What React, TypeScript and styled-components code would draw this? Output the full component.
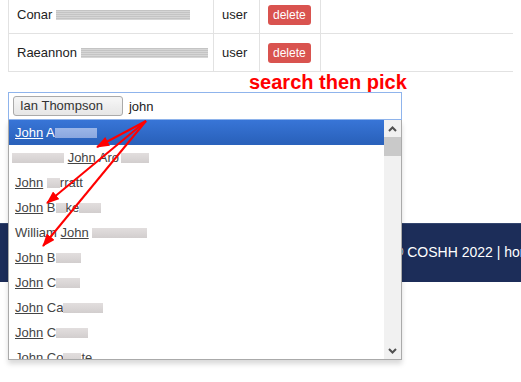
import { createGlobalStyle, styled } from "styled-components";

const GlobalStyle = createGlobalStyle`
  html, body {
    margin: 0;
    padding: 0;
    background: #fff;
  }
  body {
    font-family: "Liberation Sans", Arial, sans-serif;
    font-size: 13px;
    color: #222;
    overflow: hidden;
  }
`;

const Screen = styled.div`
  position: relative;
  display: flow-root;
  width: 521px;
  height: 382px;
  overflow: hidden;
`;

const Content = styled.div`
  margin: -4px 8px 0;
`;

const Row = styled.div`
  display: grid;
  grid-template-columns: 206px 46px 61px;
  height: 38px;
  box-sizing: border-box;
  border-bottom: 1px solid #e2e2e2;
`;

const Cell = styled.div<{ $first?: boolean }>`
  display: flex;
  align-items: center;
  padding-left: 8px;
  border-right: 1px solid #e2e2e2;
  border-left: ${(p) => (p.$first ? "1px solid #e2e2e2" : "none")};
  white-space: nowrap;
  font-size: 13px;
  color: #222;
`;

const TableRedact = styled.span<{ $w: number }>`
  display: inline-block;
  width: ${(p) => p.$w}px;
  height: 10px;
  margin-left: 4px;
  background: repeating-linear-gradient(
    to bottom,
    #c4c4c4 0px,
    #c4c4c4 1px,
    #d6d6d6 1px,
    #d6d6d6 2px
  );
  filter: blur(0.3px);
`;

const DeleteButton = styled.button`
  height: 20px;
  padding: 0 5px;
  border: none;
  border-radius: 3px;
  background: #d9534f;
  color: #fff;
  font-family: inherit;
  font-size: 12px;
  line-height: 20px;
`;

const Hint = styled.div`
  height: 20px;
  margin-left: 241px;
  font-size: 20px;
  line-height: 20px;
  font-weight: bold;
  color: #f00;
  white-space: nowrap;
`;

const SelectWrap = styled.div`
  position: relative;
  width: 394px;
`;

const SelectBox = styled.div`
  display: flex;
  align-items: center;
  gap: 6px;
  height: 28px;
  box-sizing: border-box;
  padding: 0 4px;
  border: 1px solid #8fb4ec;
  background: #fff;
`;

const Chip = styled.span`
  height: 20px;
  box-sizing: border-box;
  padding: 0 19px 0 6px;
  border: 1px solid #aaa;
  border-radius: 3px;
  background: linear-gradient(#f4f4f4 20%, #eee 50%, #e6e6e6);
  color: #333;
  line-height: 18px;
  white-space: nowrap;
`;

const Typed = styled.span`
  color: #222;
`;

const Dropdown = styled.div`
  position: absolute;
  top: 28px;
  left: 0;
  z-index: 10;
  display: flex;
  width: 394px;
  height: 240px;
  box-sizing: border-box;
  border: 1px solid #aaa;
  border-top: none;
  background: #fff;
  box-shadow: 0 4px 5px rgba(0, 0, 0, 0.15);
`;

const Results = styled.div`
  flex: 1;
  overflow: hidden;
`;

const Item = styled.div<{ $active?: boolean }>`
  height: 25px;
  padding-left: 6px;
  line-height: 25px;
  white-space: nowrap;
  color: ${(p) => (p.$active ? "#fff" : "#444")};
  background: ${(p) =>
    p.$active ? "linear-gradient(#3875d7 0%, #2a62bc 90%)" : "transparent"};
`;

const Match = styled.span`
  text-decoration: underline;
`;

const Redact = styled.span<{ $w: number; $active?: boolean; $gap?: number }>`
  display: inline-block;
  width: ${(p) => p.$w}px;
  height: 10px;
  margin-left: ${(p) => p.$gap ?? 0}px;
  vertical-align: -1px;
  background: ${(p) =>
    p.$active
      ? "linear-gradient(#9bb6e8, #8aa7df)"
      : "linear-gradient(#e2dede, #d2cece)"};
  filter: blur(0.4px);
`;

const Scrollbar = styled.div`
  display: flex;
  flex-direction: column;
  width: 17px;
  background: #f1f1f1;
`;

const ScrollArrow = styled.div`
  display: flex;
  align-items: center;
  justify-content: center;
  height: 17px;
`;

const Thumb = styled.div`
  height: 19px;
  background: #c9c9c9;
`;

const ScrollSpace = styled.div`
  flex: 1;
`;

const Footer = styled.div`
  margin-top: 103px;
  height: 58px;
  padding-left: 393px;
  background: #1c2d59;
  color: #fff;
  font-size: 14px;
  line-height: 56px;
  white-space: nowrap;
  border-top: 1px solid #34466f;
`;

const Overlay = styled.svg`
  position: absolute;
  top: 0;
  left: 0;
  z-index: 20;
  pointer-events: none;
`;

const users = [
  { name: "Conar", bar: 134 },
  { name: "Raeannon", bar: 127 },
];

function Chevron({ up }: { up?: boolean }) {
  return (
    <svg width="9" height="6" viewBox="0 0 9 6">
      <polyline
        points={up ? "1,5 4.5,1.5 8,5" : "1,1 4.5,4.5 8,1"}
        fill="none"
        stroke="#505050"
        strokeWidth="2"
      />
    </svg>
  );
}

export default function App() {
  return (
    <Screen>
      <GlobalStyle />
      <Content>
        {users.map((u) => (
          <Row key={u.name}>
            <Cell $first>
              {u.name}
              <TableRedact $w={u.bar} />
            </Cell>
            <Cell>user</Cell>
            <Cell>
              <DeleteButton>delete</DeleteButton>
            </Cell>
          </Row>
        ))}
        <Hint>search then pick</Hint>
        <SelectWrap>
          <SelectBox>
            <Chip>Ian Thompson</Chip>
            <Typed>john</Typed>
          </SelectBox>
          <Dropdown>
            <Results>
              <Item $active>
                <Match>John</Match> A<Redact $active $w={42} />
              </Item>
              <Item>
                <Redact $w={52} $gap={-3} /> <Match>John</Match> Aro
                <Redact $w={28} $gap={2} />
              </Item>
              <Item>
                <Match>John</Match> <Redact $w={13} />
                rratt
              </Item>
              <Item>
                <Match>John</Match> B<Redact $w={10} />
                ke
                <Redact $w={22} />
              </Item>
              <Item>
                William <Match>John</Match> <Redact $w={55} />
              </Item>
              <Item>
                <Match>John</Match> B<Redact $w={25} />
              </Item>
              <Item>
                <Match>John</Match> C<Redact $w={24} />
              </Item>
              <Item>
                <Match>John</Match> Ca<Redact $w={40} />
              </Item>
              <Item>
                <Match>John</Match> C<Redact $w={32} />
              </Item>
              <Item>
                <Match>John</Match> Co<Redact $w={18} />
                te
              </Item>
            </Results>
            <Scrollbar>
              <ScrollArrow>
                <Chevron up />
              </ScrollArrow>
              <Thumb />
              <ScrollSpace />
              <ScrollArrow>
                <Chevron />
              </ScrollArrow>
            </Scrollbar>
          </Dropdown>
        </SelectWrap>
      </Content>
      <Footer>© COSHH 2022 | home</Footer>
      <Overlay width="521" height="382" viewBox="0 0 521 382">
        <defs>
          <marker
            id="head"
            markerWidth="13"
            markerHeight="10"
            refX="12"
            refY="5"
            orient="auto"
            markerUnits="userSpaceOnUse"
          >
            <path d="M0,0 L13,5 L0,10 z" fill="#f00" />
          </marker>
        </defs>
        {[
          [97, 147],
          [47, 203],
          [43, 246],
        ].map(([x, y]) => (
          <line
            key={`${x}-${y}`}
            x1="146"
            y1="121"
            x2={x}
            y2={y}
            stroke="#f00"
            strokeWidth="2"
            markerEnd="url(#head)"
          />
        ))}
      </Overlay>
    </Screen>
  );
}
